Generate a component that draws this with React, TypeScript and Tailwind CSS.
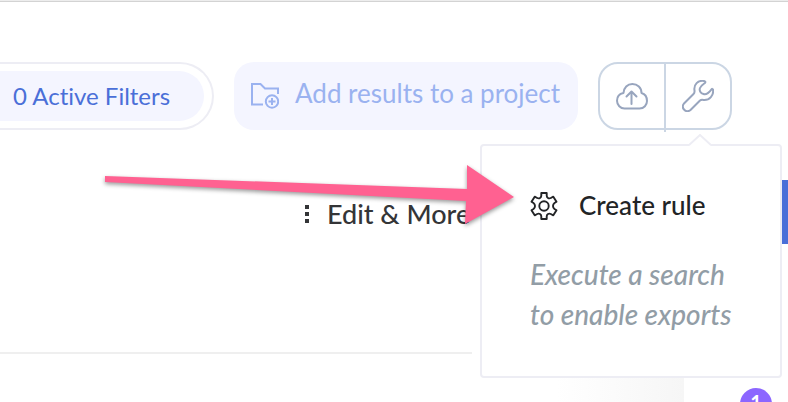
import React from "react";

function FolderPlusIcon() {
  return (
    <svg className="h-7 w-7 shrink-0" viewBox="0 0 28 28" fill="none" stroke="currentColor" strokeWidth="2" aria-hidden="true">
      <path d="M12 22.500H1V2H9.500L14 6.500H27V12" />
      <circle cx="21" cy="19.500" r="6.200" />
      <path d="M17.500 19.500h7M21 16v7" />
    </svg>
  );
}

function CloudUploadIcon() {
  return (
    <svg className="h-7 w-8" viewBox="0 0 32 28" fill="none" stroke="currentColor" strokeWidth="2" strokeLinecap="round" strokeLinejoin="round" aria-hidden="true">
      <path d="M8.500 26.500H23.500C28 26.500 31 23 31 19C31 14.500 28.500 11.800 25.500 11C25.500 5.500 21.500 2 16.300 2C11.500 2 7.800 5.500 7.500 11C3.500 11.800 1 14.800 1 18.800C1 23 4.500 26.500 8.500 26.500Z" />
      <path d="M15.500 22V10.500M10.500 14.500L15.500 9.500L20.500 14.500" />
    </svg>
  );
}

function WrenchIcon() {
  return (
    <svg className="h-8 w-8" viewBox="0 0 32 32" fill="none" stroke="currentColor" strokeWidth="2" strokeLinejoin="round" aria-hidden="true">
      <path d="M22 1C16 0 11.500 4.500 12.500 10.500C12.700 12 12.500 13 11.500 14L2 23.500C-1.500 28 4 33.500 8.500 30L18 20.500C19 19.700 20 19.700 21.500 20C27.500 20.500 32 15.500 31 9.500C30.800 8.700 30 8.700 29.500 9.300C27.500 12 25 15 21.500 14C18.500 13.300 17 10.500 18 8C19 5.500 21 4.500 23 3C23.800 2 23.300 1.200 22 1Z" />
    </svg>
  );
}

function GearIcon() {
  return (
    <svg className="h-7 w-7 shrink-0" viewBox="0 0 28 28" fill="none" stroke="currentColor" strokeWidth="1.900" strokeLinejoin="round" aria-hidden="true">
      <path d="M11.300 1H16.700V3.500C16.700 5.800 18.800 7 20.800 6L23.300 4.700L26.500 9.700L24.500 11C22.500 12.500 22.500 15.500 24.500 17L26.500 18.300L23.300 23.300L20.800 22C18.800 21 16.700 22.200 16.700 24.500V27H11.300V24.500C11.300 22.200 9.200 21 7.200 22L4.700 23.300L1.500 18.300L3.500 17C5.500 15.500 5.500 12.500 3.500 11L1.500 9.700L4.700 4.700L7.200 6C9.200 7 11.300 5.800 11.300 3.500Z" />
      <circle cx="14" cy="14" r="4.700" />
    </svg>
  );
}

function ToolsMenu() {
  return (
    <div className="absolute top-20 -right-[52px] z-10 w-[302px] rounded border-2 border-[#ededf4] bg-white px-12 py-10">
      <svg className="absolute -top-3 left-[207px] h-3 w-[22px]" viewBox="0 0 22 12" aria-hidden="true">
        <path d="M0 12L11 1L22 12Z" fill="white" />
        <path d="M0 11L11 1L22 11" fill="none" stroke="#ededf4" strokeWidth="2" />
      </svg>
      <button type="button" className="flex h-10 items-center gap-[21px] text-[26px] leading-10 font-medium whitespace-nowrap text-[#222426]">
        <GearIcon />
        <span className="pb-0.5">Create rule</span>
      </button>
      <p className="mt-7 mb-0.5 text-[28px] leading-10 font-medium whitespace-nowrap text-[#929da6] italic">
        Execute a search
        <br />
        to enable exports
      </p>
    </div>
  );
}

function PointerArrow() {
  return (
    <svg className="pointer-events-none absolute top-[159px] left-[100px] z-20 h-[76px] w-[424px] drop-shadow-[0_2px_2px_rgba(0,0,0,0.4)]" viewBox="0 0 424 76" aria-hidden="true">
      <path d="M5 16L367 29V5L414 37L365 64L366 41L5 22Z" fill="#ff6191" />
    </svg>
  );
}

export default function App() {
  return (
    <div className="relative flex h-screen flex-col overflow-hidden border-t border-[#ededed] bg-white font-['Lato','Open_Sans',sans-serif] [font-variant-ligatures:none]">
      <div className="h-px shrink-0 bg-[#d3d3d3]" />

      <header className="mt-[60px] flex h-[68px] shrink-0 gap-5">
        <div className="flex w-[214px] shrink-0 items-center rounded-r-full border-2 border-l-0 border-[#ededf4] pr-2">
          <button type="button" className="h-[50px] w-full rounded-r-full bg-[#f4f5ff] pl-[13px] text-left text-2xl whitespace-nowrap text-[#4a6fd8]">
            0 Active Filters
          </button>
        </div>

        <button type="button" className="flex w-[344px] shrink-0 items-center gap-4 rounded-[20px] bg-[#f4f5ff] pl-[17px] text-[26px] whitespace-nowrap text-[#9ab2f0]">
          <FolderPlusIcon />
          <span className="pb-1.5">Add results to a project</span>
        </button>

        <div className="relative flex w-[134px] shrink-0 rounded-[20px] border-2 border-[#cbd6e4] text-[#98a5be]">
          <button type="button" aria-label="Upload" className="flex flex-1 items-center justify-center">
            <CloudUploadIcon />
          </button>
          <div className="-mb-1 w-0.5 bg-[#cbd6e4]" />
          <button type="button" aria-label="Tools" className="flex flex-1 items-center justify-center">
            <WrenchIcon />
          </button>
          <ToolsMenu />
        </div>
      </header>

      <div className="mt-[50px] flex h-16 shrink-0 items-center justify-between pl-[305px]">
        <button type="button" className="flex items-center gap-[18px] pt-1 text-[27px] leading-10 font-medium whitespace-nowrap text-[#343537]">
          <span className="flex flex-col gap-[3px]">
            <span className="size-1 bg-current" />
            <span className="size-1 bg-current" />
            <span className="size-1 bg-current" />
          </span>
          Edit &amp; More
        </button>
        <div className="h-full w-1.5 bg-[#4a6fd8]" />
      </div>

      <div className="mt-[108px] flex flex-1">
        <div className="w-[472px] shrink-0 border-t-2 border-[#efefef]" />
        <div className="w-[212px] shrink-0 bg-linear-to-r from-white from-40% to-[#f6f6f6]" />
        <div className="flex flex-1 items-start justify-end pt-9 pr-4">
          <span className="flex size-8 shrink-0 items-start justify-center rounded-full bg-[#8c66ff] pt-1 text-xl leading-5 font-bold text-white">1</span>
        </div>
      </div>

      <PointerArrow />
    </div>
  );
}
